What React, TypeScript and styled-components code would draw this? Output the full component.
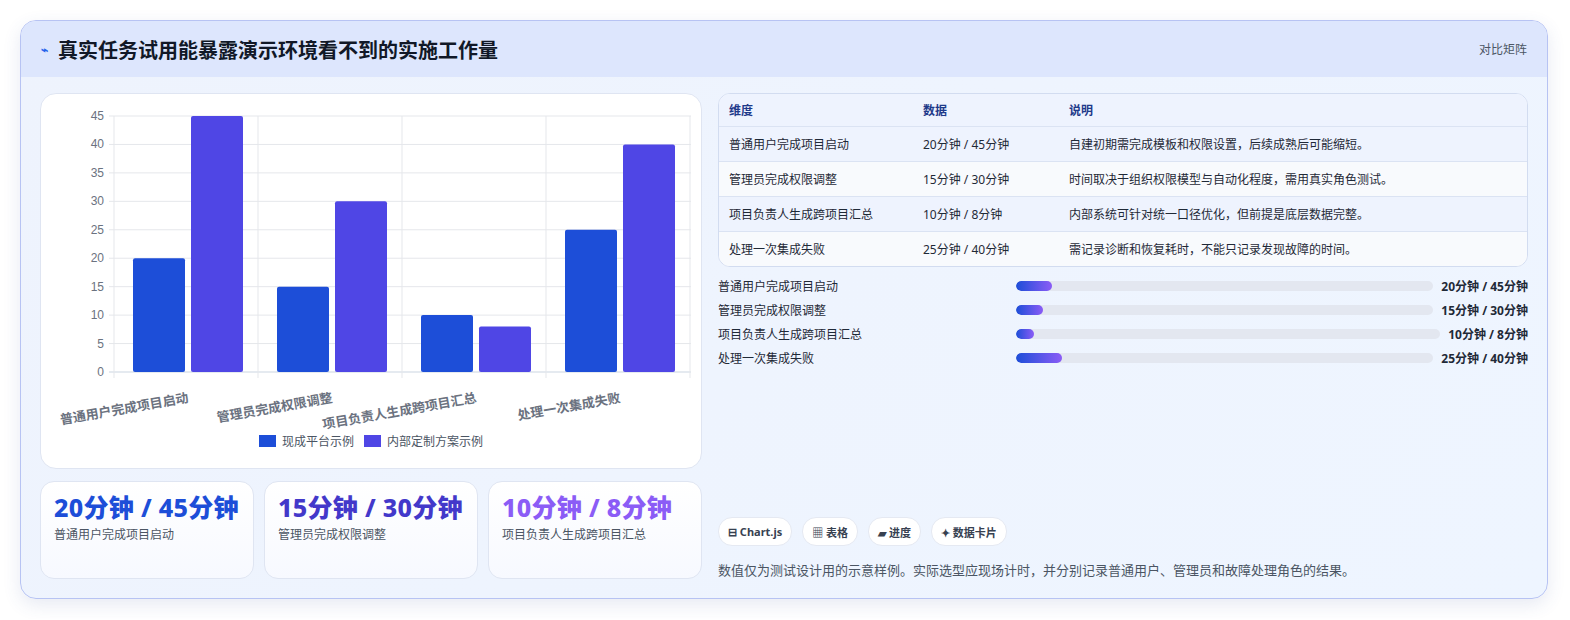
import React from "react";
import styled, { createGlobalStyle } from "styled-components";

const Global = createGlobalStyle`
  body { margin: 0; background: #fff; font-family: "Noto Sans", "Noto Sans CJK SC", sans-serif; }
`;

const Wrap = styled.div`padding: 20px 22px 20px 20px;`;
const Card = styled.div`
  border: 1px solid #b7c3f3; border-radius: 16px; overflow: hidden;
  background: linear-gradient(135deg, #eef3fd, #eef5ff);
  box-shadow: 0 6px 18px rgba(60,80,160,0.12);
`;
const Header = styled.div`
  height: 56px; background: #dde6fd; display: flex; align-items: center;
  justify-content: space-between; padding: 0 20px;
`;
const Title = styled.h2`
  margin: 0; font-size: 20px; font-weight: 700; color: #111827;
  display: flex; align-items: center; gap: 10px;
`;
const Bolt = styled.span`color: #2563eb; font-size: 12px;`;
const Tag = styled.span`font-size: 12px; color: #4b5563;`;
const Body = styled.div`
  display: grid; grid-template-columns: 662px 1fr; gap: 16px; padding: 16px 19px 19px 19px;
`;
const Col = styled.div`display: flex; flex-direction: column; gap: 12px;`;
const ChartBox = styled.div`
  height: 376px; background: #fff; border: 1px solid #dfe5f2; border-radius: 16px; box-sizing: border-box;
`;
const Cards = styled.div`display: grid; grid-template-columns: repeat(3, 1fr); gap: 10px;`;
const Stat = styled.div`
  height: 98px; box-sizing: border-box; padding: 12px 13px; border: 1px solid #dfe5f2; border-radius: 14px;
  background: linear-gradient(180deg, #fff, #f7f9ff);
`;
const StatNum = styled.div<{ $c: string }>`
  font-size: 25px; font-weight: 800; line-height: 26px; color: ${p => p.$c}; letter-spacing: 0.3px;
`;
const StatLbl = styled.div`font-size: 12px; color: #4b5563; margin-top: 5px;`;

const Right = styled.div`display: flex; flex-direction: column;`;
const Table = styled.div`
  border: 1px solid #d2dcf0; border-radius: 12px; overflow: hidden; background: #fff;
`;
const Row = styled.div<{ $bg: string; $h: number }>`
  display: grid; grid-template-columns: 194px 146px 1fr; align-items: center;
  height: ${p => p.$h}px; padding: 0 10px; background: ${p => p.$bg};
  border-bottom: 1px solid #dbe3f3; font-size: 12px; color: #1f2937;
  &:last-child { border-bottom: none; }
`;
const Th = styled.span`color: #1e3a8a; font-weight: 600;`;
const Bars = styled.div`display: flex; flex-direction: column; gap: 6px; margin-top: 10px;`;
const BarRow = styled.div`display: flex; align-items: center; height: 18px; font-size: 12px; color: #1f2937;`;
const BarLbl = styled.span`width: 298px; flex-shrink: 0;`;
const Track = styled.div`flex: 1; height: 10px; border-radius: 5px; background: #e3e7f0; overflow: hidden;`;
const Fill = styled.div`height: 100%; border-radius: 5px; background: linear-gradient(90deg, #1d4ed8, #8b5cf6);`;
const BarVal = styled.span`font-weight: 700; margin-left: 8px; white-space: nowrap;`;
const Spacer = styled.div`flex: 1;`;
const Chips = styled.div`display: flex; gap: 10px;`;
const Chip = styled.span`
  height: 27px; padding: 0 9px; display: inline-flex; align-items: center; gap: 4px;
  border: 1px solid #e5e9f2; border-radius: 14px; background: #fff;
  font-size: 11px; font-weight: 700; color: #374151;
`;
const Note = styled.div`font-size: 13px; color: #4b5563; margin-top: 14px;`;

const cats = ["普通用户完成项目启动", "管理员完成权限调整", "项目负责人生成跨项目汇总", "处理一次集成失败"];
const a = [20, 15, 10, 25];
const b = [45, 30, 8, 40];

function Chart() {
  const x0 = 73, y0 = 278, top = 22, w = 144;
  const sy = (v: number) => y0 - (v / 45) * (y0 - top);
  return (
    <svg width="660" height="374" viewBox="0 0 660 374" style={{ display: "block" }}>
      {[0, 5, 10, 15, 20, 25, 30, 35, 40, 45].map(v => (
        <g key={v}>
          <line x1={x0 - 5} x2={650} y1={sy(v)} y2={sy(v)} stroke={v === 0 ? "#cbd5e1" : "#e5e7eb"} />
          <text x={x0 - 10} y={sy(v) + 4} fontSize="12" fill="#6b7280" textAnchor="end" fontFamily="Liberation Sans, sans-serif">{v}</text>
        </g>
      ))}
      {[0, 1, 2, 3, 4].map(i => (
        <line key={i} x1={x0 + i * w} x2={x0 + i * w} y1={top} y2={y0 + 6} stroke="#e5e7eb" />
      ))}
      {cats.map((c, i) => (
        <g key={c}>
          <rect x={x0 + i * w + 19} y={sy(a[i])} width={52} height={y0 - sy(a[i])} fill="#1d4ed8" rx="2" />
          <rect x={x0 + i * w + 77} y={sy(b[i])} width={52} height={y0 - sy(b[i])} fill="#4f46e5" rx="2" />
          <text x={x0 + i * w + 75} y={y0 + 30} fontSize="13" fontWeight="700" fill="#6b7280" textAnchor="end"
            transform={`rotate(-10 ${x0 + i * w + 75} ${y0 + 30})`}>{c}</text>
        </g>
      ))}
      <rect x={218} y={341} width={17} height={12} fill="#1d4ed8" />
      <text x={241} y={352} fontSize="12" fill="#4b5563">现成平台示例</text>
      <rect x={323} y={341} width={17} height={12} fill="#4f46e5" />
      <text x={346} y={352} fontSize="12" fill="#4b5563">内部定制方案示例</text>
    </svg>
  );
}

const rows = [
  ["普通用户完成项目启动", "20分钟 / 45分钟", "自建初期需完成模板和权限设置，后续成熟后可能缩短。"],
  ["管理员完成权限调整", "15分钟 / 30分钟", "时间取决于组织权限模型与自动化程度，需用真实角色测试。"],
  ["项目负责人生成跨项目汇总", "10分钟 / 8分钟", "内部系统可针对统一口径优化，但前提是底层数据完整。"],
  ["处理一次集成失败", "25分钟 / 40分钟", "需记录诊断和恢复耗时，不能只记录发现故障的时间。"],
];
const pct = [8.7, 6.4, 4.3, 11];

export default function App() {
  return (
    <Wrap>
      <Global />
      <Card>
        <Header>
          <Title><Bolt>⌁</Bolt>真实任务试用能暴露演示环境看不到的实施工作量</Title>
          <Tag>对比矩阵</Tag>
        </Header>
        <Body>
          <Col>
            <ChartBox><Chart /></ChartBox>
            <Cards>
              <Stat><StatNum $c="#1d4ed8">20分钟 / 45分钟</StatNum><StatLbl>普通用户完成项目启动</StatLbl></Stat>
              <Stat><StatNum $c="#4338ca">15分钟 / 30分钟</StatNum><StatLbl>管理员完成权限调整</StatLbl></Stat>
              <Stat><StatNum $c="#8b5cf6">10分钟 / 8分钟</StatNum><StatLbl>项目负责人生成跨项目汇总</StatLbl></Stat>
            </Cards>
          </Col>
          <Right>
            <Table>
              <Row $bg="#eef3fe" $h={32}><Th>维度</Th><Th>数据</Th><Th>说明</Th></Row>
              {rows.map((r, i) => (
                <Row key={i} $bg={i % 2 ? "#f8fafd" : "#eef3fe"} $h={34}>
                  <span>{r[0]}</span><span>{r[1]}</span><span>{r[2]}</span>
                </Row>
              ))}
            </Table>
            <Bars>
              {rows.map((r, i) => (
                <BarRow key={i}>
                  <BarLbl>{r[0]}</BarLbl>
                  <Track><Fill style={{ width: `${pct[i]}%` }} /></Track>
                  <BarVal>{r[1]}</BarVal>
                </BarRow>
              ))}
            </Bars>
            <Spacer />
            <Chips>
              <Chip>⊟ Chart.js</Chip><Chip>▦ 表格</Chip><Chip>▰ 进度</Chip><Chip>✦ 数据卡片</Chip>
            </Chips>
            <Note>数值仅为测试设计用的示意样例。实际选型应现场计时，并分别记录普通用户、管理员和故障处理角色的结果。</Note>
          </Right>
        </Body>
      </Card>
    </Wrap>
  );
}
